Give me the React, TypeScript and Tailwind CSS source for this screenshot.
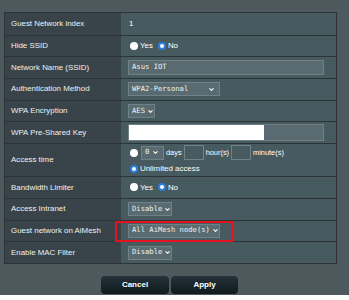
import { ChevronDown } from "lucide-react";

const LABEL_W = "w-[116px]";

function Row({
  label,
  children,
  tall = false,
}: {
  label: string;
  children?: React.ReactNode;
  tall?: boolean;
}) {
  return (
    <div
      className={`flex border-t border-[#2c3438] first:border-t-0 ${
        tall ? "h-[33px]" : "h-[21.7px]"
      }`}
    >
      <div
        className={`${LABEL_W} shrink-0 flex items-center pl-[6px] bg-[#39444a] text-[7.9px] text-[#eef1f2]`}
      >
        {label}
      </div>
      <div className="flex-1 flex items-center pl-[7px] bg-[#475a60] text-[7.9px] text-white">
        {children}
      </div>
    </div>
  );
}

function Radio({ checked, label }: { checked?: boolean; label: string }) {
  return (
    <span className="flex items-center gap-[2px] mr-[5px]">
      {checked ? (
        <span className="w-[8px] h-[8px] rounded-full bg-white border-[2px] border-[#2a7de1]" />
      ) : (
        <span className="w-[8px] h-[8px] rounded-full bg-white" />
      )}
      <span>{label}</span>
    </span>
  );
}

function Select({ value, w }: { value: string; w: string }) {
  return (
    <div
      className={`${w} h-[14px] flex items-center justify-between gap-[2px] pl-[3px] pr-[4px] whitespace-nowrap bg-[#596b70] border border-[#6f8287] font-['DejaVu_Sans_Mono',monospace] text-[7.2px] text-[#eef2f3]`}
    >
      <span>{value}</span>
      <ChevronDown size={7} strokeWidth={3.5} className="shrink-0 text-white" />
    </div>
  );
}

export default function App() {
  return (
    <div className="w-[349px] h-[300px] bg-white font-['Liberation_Sans',Arial,sans-serif]">
      <div className="h-[295px] bg-[#4e595d] pt-[12px] pl-[4px]">
        <div className="w-[333px] border border-[#2c3438]">
          <Row label="Guest Network index">
            <span className="pl-[1px]">1</span>
          </Row>
          <Row label="Hide SSID">
            <span className="pl-[2px] flex items-center">
              <Radio label="Yes" />
              <Radio checked label="No" />
            </span>
          </Row>
          <Row label="Network Name (SSID)">
            <div className="w-[196px] h-[15px] flex items-center pl-[3px] bg-[#596b70] border border-[#6f8287] font-['DejaVu_Sans_Mono',monospace] text-[7.2px] text-[#eef2f3]">
              Asus IOT
            </div>
          </Row>
          <Row label="Authentication Method">
            <Select value="WPA2-Personal" w="w-[92px]" />
          </Row>
          <Row label="WPA Encryption">
            <Select value="AES" w="w-[27px]" />
          </Row>
          <Row label="WPA Pre-Shared Key">
            <div className="w-[196px] h-[17px] flex bg-[#596b70] border border-[#6f8287]">
              <div className="w-[135px] h-full bg-white" />
            </div>
          </Row>
          <Row label="Access time" tall>
            <div className="flex flex-col gap-[3px] pl-[2px]">
              <div className="flex items-center gap-[2px] text-[7.4px]">
                <span className="w-[8px] h-[8px] mr-[1px] rounded-full bg-white" />
                <Select value="0" w="w-[23px]" />
                <span>days</span>
                <span className="w-[20px] h-[15px] bg-[#475a60] border border-[#6f8287]" />
                <span>hour(s)</span>
                <span className="w-[20px] h-[15px] bg-[#475a60] border border-[#6f8287]" />
                <span>minute(s)</span>
              </div>
              <Radio checked label="Unlimited access" />
            </div>
          </Row>
          <Row label="Bandwidth Limiter">
            <span className="pl-[2px] flex items-center">
              <Radio label="Yes" />
              <Radio checked label="No" />
            </span>
          </Row>
          <Row label="Access Intranet">
            <Select value="Disable" w="w-[44px]" />
          </Row>
          <Row label="Guest network on AiMesh">
            <div className="relative">
              <Select value="All AiMesh node(s)" w="w-[92px]" />
              <div className="absolute left-[-13px] top-[-3px] w-[118px] h-[21px] border-[2px] border-[#e3141f]" />
            </div>
          </Row>
          <Row label="Enable MAC Filter">
            <Select value="Disable" w="w-[44px]" />
          </Row>
        </div>
        <div className="flex justify-center gap-[2px] mt-[12px] pr-[14px]">
          <button className="w-[68px] h-[18px] rounded-[4px] bg-gradient-to-b from-[#24323a] to-[#111a1e] text-white text-[8px] font-bold">
            Cancel
          </button>
          <button className="w-[67px] h-[18px] rounded-[4px] bg-gradient-to-b from-[#24323a] to-[#111a1e] text-white text-[8px] font-bold">
            Apply
          </button>
        </div>
      </div>
    </div>
  );
}
